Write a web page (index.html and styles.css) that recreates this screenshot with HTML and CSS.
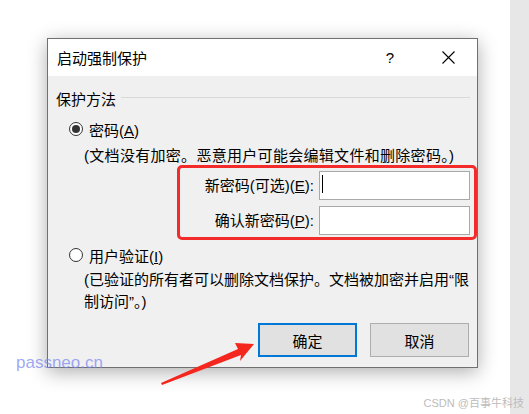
FILE: index.html
```html
<!DOCTYPE html>
<html>
<head>
<meta charset="utf-8">
<title>启动强制保护</title>
<link rel="stylesheet" href="styles.css">
</head>
<body>

<div class="desk">
	<div class="stage">
		<div class="dialog">
			<div class="titlebar">
				<span class="title">启动强制保护</span>
				<span class="tb-help">?</span>
				<span class="tb-close">
					<svg width="13" height="13" viewBox="0 0 13 13"><path d="M0.5 0.5 L12.5 12.5 M12.5 0.5 L0.5 12.5" stroke="#000" stroke-width="1.1" fill="none"/></svg>
				</span>
			</div>

			<div class="panel">
				<div class="group-head"><span>保护方法</span><span class="rule"></span></div>

				<div class="option"><span class="radio checked"></span><span>密码(<u>A</u>)</span></div>
				<p class="note note-1">(文档没有加密。恶意用户可能会编辑文件和删除密码。)</p>

				<div class="fields">
					<span class="field-label">新密码(可选)(<u>E</u>):</span>
					<div class="field"><span class="caret"></span></div>
					<span class="field-label">确认新密码(<u>P</u>):</span>
					<div class="field"></div>
				</div>

				<div class="option option-2"><span class="radio"></span><span>用户验证(<u>I</u>)</span></div>
				<p class="note note-2">(已验证的所有者可以删除文档保护。文档被加密并启用“限<br>制访问”。)</p>

				<div class="actions">
					<button class="btn btn-default">确定</button>
					<button class="btn">取消</button>
				</div>
			</div>
		</div>
	</div>
	<div class="side-strip"></div>

	<!-- annotations on top of the screenshot -->
	<span class="mark-site">passneo.cn</span>
	<svg class="arrow" width="110" height="55" viewBox="0 0 110 55">
		<polygon points="11,48 88,14 85,8 104,9 90,26 91,20 12,50" fill="#f4261e"/>
	</svg>
	<span class="mark-csdn">CSDN @百事牛科技</span>
</div>

</body>
</html>
```

FILE: styles.css
```css
body {
	margin: 0;
	padding: 0;
	background-color: #fff;
	font-family: "Liberation Sans", "Noto Sans CJK SC", sans-serif;
	font-size: 15px;
	color: #000;
}

.desk {
	position: relative;
	display: flex;
	height: 414px;
	overflow: hidden;
}

.stage {
	flex: 1;
	padding: 38px 0 0 47px;
}

.side-strip {
	width: 19px;
	background-color: #e7e7e7;
}

/* dialog window */

.dialog {
	width: 429px;
	border: 1px solid #707070;
	background-color: #f0f0f0;
	box-shadow: 0 4px 18px rgba(0, 0, 0, 0.32);
}

.titlebar {
	display: flex;
	align-items: center;
	height: 37px;
	padding: 0 9px 0 9px;
	background-color: #fff;
}

.title {
	flex: 1;
}

.tb-help {
	width: 30px;
	margin-right: 23px;
	text-align: center;
}

.tb-close {
	display: flex;
	justify-content: center;
	width: 40px;
}

.panel {
	padding: 12px 7px 10px 8px;
}

.group-head {
	display: flex;
	align-items: center;
	gap: 5px;
	height: 20px;
}

.group-head .rule {
	flex: 1;
	height: 1px;
	margin-top: -2px;
	background-color: #d9d9d9;
}

.option {
	display: flex;
	align-items: center;
	gap: 6px;
	height: 20px;
	margin-top: 11px;
	padding-left: 13px;
}

.option-2 {
	margin-top: 10px;
}

.radio {
	position: relative;
	width: 14px;
	height: 14px;
	box-sizing: border-box;
	border: 1px solid #333;
	border-radius: 50%;
	background-color: #fff;
}

.radio.checked::after {
	content: "";
	position: absolute;
	left: 2px;
	top: 2px;
	width: 8px;
	height: 8px;
	border-radius: 50%;
	background-color: #333;
}

.note {
	margin: 7px 0 0 0;
	padding-left: 28px;
	line-height: 20px;
}

.note-1 {
	letter-spacing: 0.3px;
}

.note-2 {
	margin-top: 4px;
	line-height: 22px;
}

/* password fields */

.fields {
	position: relative;
	display: grid;
	grid-template-columns: 1fr 151px;
	column-gap: 5px;
	row-gap: 6px;
	margin-top: 5px;
}

.fields::after {
	content: "";
	position: absolute;
	left: 121px;
	top: -6px;
	right: -7px;
	bottom: -5px;
	border: 3px solid #f42b2b;
	border-radius: 5px;
}

.field-label {
	text-align: right;
	line-height: 29px;
}

.field {
	height: 29px;
	box-sizing: border-box;
	padding: 3px 2px;
	border: 1px solid #a8a8a8;
	background-color: #fff;
}

.caret {
	display: block;
	width: 1px;
	height: 18px;
	background-color: #000;
}

/* buttons */

.actions {
	display: flex;
	justify-content: flex-end;
	gap: 13px;
	margin-top: 10px;
	padding-right: 1px;
}

.btn {
	width: 99px;
	height: 34px;
	box-sizing: border-box;
	border: 1px solid #adadad;
	background-color: #e1e1e1;
	font-family: inherit;
	font-size: 15px;
	color: #000;
	padding: 0;
}

.btn-default {
	border: 2px solid #0078d7;
}

/* annotations */

.mark-site {
	position: absolute;
	left: 16px;
	top: 351px;
	font-size: 17px;
	line-height: 24px;
	color: rgba(120, 135, 240, 0.72);
}

.arrow {
	position: absolute;
	left: 150px;
	top: 335px;
}

.mark-csdn {
	position: absolute;
	right: 5px;
	top: 395px;
	font-size: 11px;
	line-height: 16px;
	color: #bcbcbc;
}
```
